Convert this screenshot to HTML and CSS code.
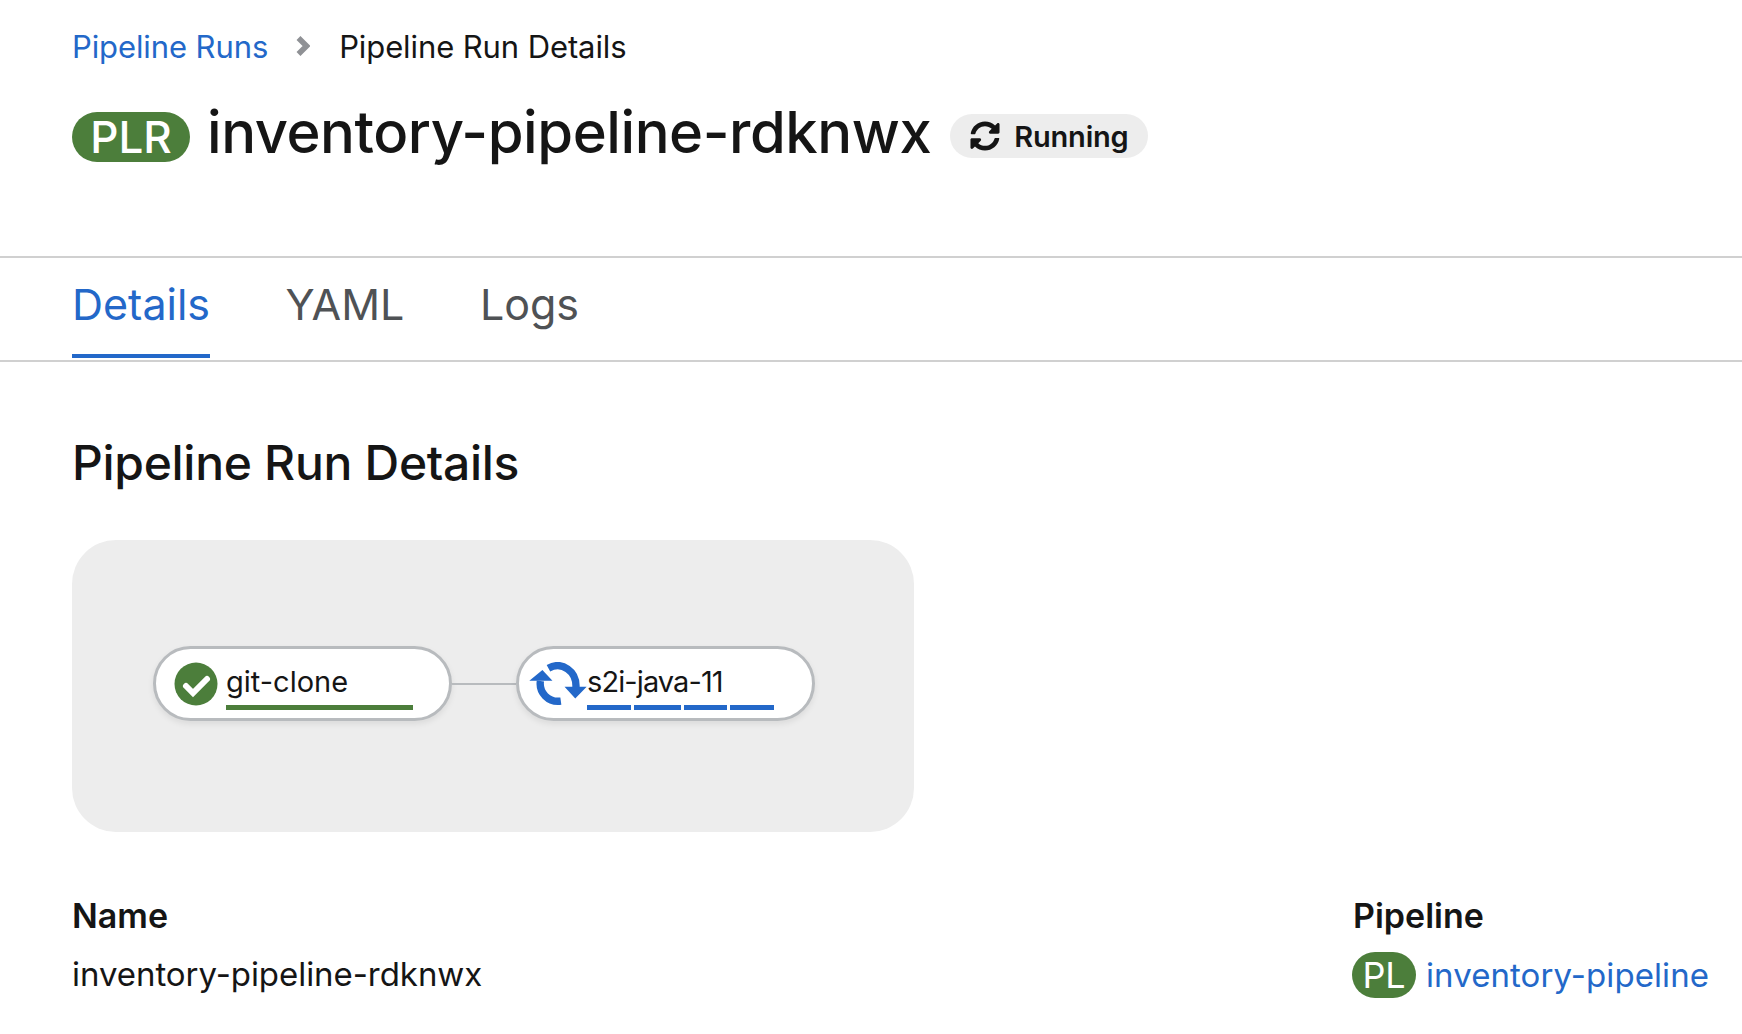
FILE: index.html
```html
<!DOCTYPE html>
<html lang="en">
<head>
    <meta charset="UTF-8">
    <meta name="viewport" content="width=device-width, initial-scale=1.0">
    <title>Pipeline Run Details</title>
    <link rel="stylesheet" href="styles.css">
</head>
<body>
    <nav class="breadcrumb">
        <a href="#" class="link">Pipeline Runs</a>
        <svg class="crumb-sep" viewBox="0 0 15 22"><path d="M3.5 3l8 8-8 8" fill="none" stroke="#8f9195" stroke-width="5.5"/></svg>
        <span>Pipeline Run Details</span>
    </nav>

    <header class="title-row">
        <span class="badge badge-plr">PLR</span>
        <h1>inventory-pipeline-rdknwx</h1>
        <span class="status">
            <svg class="status-icon" viewBox="0 0 512 512"><path fill="#151515" d="M370.72 133.28C339.458 104.008 298.888 87.962 255.848 88c-77.458.068-144.328 53.178-162.791 126.85-1.344 5.363-6.122 9.15-11.651 9.15H24.103c-7.498 0-13.194-6.807-11.807-14.176C33.933 94.924 134.813 8 256 8c66.448 0 126.791 26.136 171.315 68.685L463.03 40.97C478.149 25.851 504 36.559 504 57.941V192c0 13.255-10.745 24-24 24H345.941c-21.382 0-32.09-25.851-16.971-40.971l41.75-41.749zM32 296h134.059c21.382 0 32.09 25.851 16.971 40.971l-41.75 41.75c31.262 29.273 71.835 45.319 114.876 45.28 77.418-.07 144.315-53.144 162.787-126.849 1.344-5.363 6.122-9.15 11.651-9.15h57.304c7.498 0 13.194 6.807 11.807 14.176C478.067 417.076 377.187 504 256 504c-66.448 0-126.791-26.136-171.315-68.685L48.97 471.03C33.851 486.149 8 475.441 8 454.059V320c0-13.255 10.745-24 24-24z"/></svg>
            Running
        </span>
    </header>

    <div class="tabs">
        <a href="#" class="tab active">Details</a>
        <a href="#" class="tab">YAML</a>
        <a href="#" class="tab">Logs</a>
    </div>

    <main class="content">
        <h2>Pipeline Run Details</h2>

        <div class="graph">
            <div class="node">
                <svg class="check-icon" viewBox="0 0 44 44"><circle cx="22" cy="22" r="21.5" fill="#4c7e3b"/><path d="M12 24l7 7 14-14" fill="none" stroke="#fff" stroke-width="6" stroke-linecap="round"/></svg>
                <div class="node-body">
                    <span class="node-name">git-clone</span>
                    <div class="bar bar-green"></div>
                </div>
            </div>
            <div class="connector"></div>
            <div class="node node-running">
                <svg class="sync-icon" viewBox="27 34 173 130">
                    <path d="M85 52C125 30 170 60 167 110M61 90C56 125 85 155 122 150" fill="none" stroke="#2368c9" stroke-width="22"/>
                    <path d="M28 89L67 57 97 89zM133 107H199L165 142z" fill="#2368c9"/>
                </svg>
                <div class="node-body">
                    <span class="node-name node-name-tight">s2i-java-11</span>
                    <div class="bar bar-blue">
                        <span class="seg seg-1"></span>
                        <span class="seg seg-2"></span>
                        <span class="seg seg-3"></span>
                        <span class="seg seg-1"></span>
                    </div>
                </div>
            </div>
        </div>

        <div class="details">
            <dl>
                <dt>Name</dt>
                <dd>inventory-pipeline-rdknwx</dd>
            </dl>
            <dl class="details-right">
                <dt>Pipeline</dt>
                <dd class="resource">
                    <span class="badge badge-pl">PL</span>
                    <a href="#" class="link resource-link">inventory-pipeline</a>
                </dd>
            </dl>
        </div>
    </main>
</body>
</html>
```

FILE: styles.css
```css
body {
    margin: 0;
    font-family: Inter, "Liberation Sans", sans-serif;
    color: #151515;
    background-color: #fff;
    overflow: hidden;
}
a {
    text-decoration: none;
}
.link {
    color: #2368c9;
}
.breadcrumb {
    display: flex;
    align-items: center;
    margin-top: 27px;
    padding: 0 72px;
    height: 38px;
    font-size: 31px;
    letter-spacing: -0.1px;
}
.crumb-sep {
    width: 15px;
    height: 22px;
    margin: 0 29px 0 27px;
}
.title-row {
    display: flex;
    align-items: center;
    margin-top: 37px;
    padding: 0 72px;
    height: 70px;
}
h1 {
    margin: 0 19px 11px 17px;
    font-size: 58px;
    font-weight: 500;
    letter-spacing: -0.45px;
    line-height: 60px;
}
.badge {
    display: inline-flex;
    align-items: center;
    justify-content: center;
    color: #fff;
    background-color: #4c7e3b;
}
.badge-plr {
    width: 118px;
    height: 50px;
    border-radius: 25px;
    font-size: 44px;
    font-weight: 500;
}
.status {
    display: flex;
    align-items: center;
    width: 198px;
    height: 44px;
    box-sizing: border-box;
    padding-left: 20px;
    margin-bottom: 2px;
    border-radius: 22px;
    background-color: #ededed;
    font-size: 29px;
    font-weight: 600;
    letter-spacing: -0.2px;
}
.status-icon {
    width: 30px;
    height: 30px;
    margin-right: 14px;
}
.tabs {
    display: flex;
    gap: 75.5px;
    margin-top: 84px;
    padding: 0 72px;
    height: 102px;
    border-top: 2px solid #d0d0d0;
    border-bottom: 2px solid #d0d0d0;
}
.tab {
    display: flex;
    align-items: center;
    height: 100px;
    box-sizing: border-box;
    padding-bottom: 5px;
    font-size: 43px;
    color: #4f5255;
    border-bottom: 4px solid transparent;
}
.tab.active {
    color: #2368c9;
    border-bottom-color: #2368c9;
}
.content {
    padding: 0 32px 0 72px;
}
h2 {
    margin: 71px 0 0;
    font-size: 48px;
    font-weight: 500;
    letter-spacing: -0.3px;
    line-height: 60px;
}
.graph {
    display: flex;
    align-items: center;
    width: 842px;
    height: 292px;
    box-sizing: border-box;
    margin-top: 47px;
    padding: 0 0 5px 81px;
    border-radius: 44px;
    background-color: #ededed;
}
.node {
    display: flex;
    align-items: center;
    width: 299px;
    height: 75px;
    box-sizing: border-box;
    padding-left: 18px;
    border: 3px solid #b8bbbe;
    border-radius: 38px;
    background-color: #fff;
    box-shadow: 0 3px 6px rgba(0, 0, 0, 0.08);
}
.connector {
    width: 64px;
    height: 2px;
    background-color: #b8bbbe;
}
.check-icon {
    flex: none;
    width: 44px;
    height: 44px;
    margin-right: 8px;
}
.node-running {
    padding-left: 10px;
}
.sync-icon {
    flex: none;
    width: 58px;
    height: 44px;
}
.node-body {
    width: 187px;
    margin-top: 6px;
}
.node-name {
    display: block;
    font-size: 29px;
    line-height: 36px;
}
.node-name-tight {
    letter-spacing: -0.9px;
}
.bar {
    display: flex;
    height: 5px;
    margin-top: 5px;
}
.bar-green {
    background-color: #4c7e3b;
}
.bar-blue {
    gap: 3px;
}
.seg {
    background-color: #2368c9;
}
.seg-1 { width: 44px; }
.seg-2 { width: 47px; }
.seg-3 { width: 43px; }
.details {
    display: flex;
    justify-content: space-between;
    margin-top: 62px;
}
dl {
    margin: 0;
}
dt {
    font-size: 34px;
    font-weight: 600;
    line-height: 44px;
}
dd {
    margin: 14px 0 0;
    font-size: 33px;
    line-height: 44px;
    letter-spacing: -0.05px;
    white-space: nowrap;
}
.details-right {
    width: 357px;
}
.resource {
    display: flex;
    align-items: center;
    gap: 10px;
}
.resource-link {
    letter-spacing: 0.08px;
}
.badge-pl {
    flex: none;
    width: 64px;
    height: 46px;
    margin-left: -1px;
    border-radius: 23px;
    font-size: 36px;
}
```
